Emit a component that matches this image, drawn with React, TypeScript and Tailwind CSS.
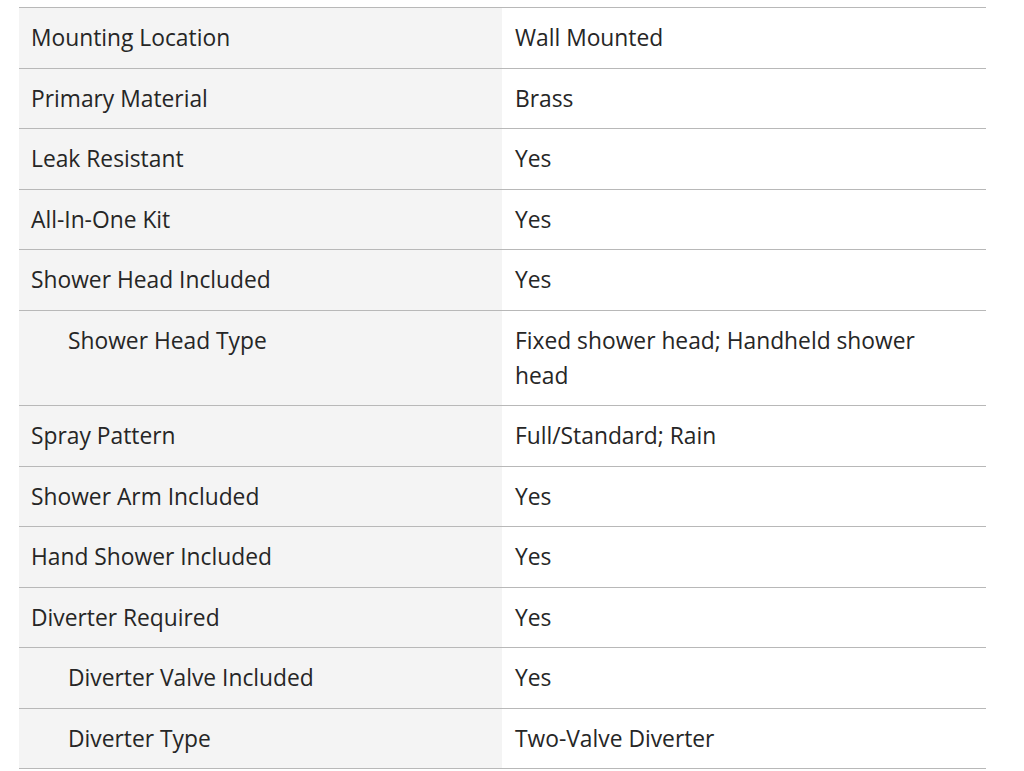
import React from "react";

const rows: { label: string; value: string; indent?: boolean }[] = [
  { label: "Mounting Location", value: "Wall Mounted" },
  { label: "Primary Material", value: "Brass" },
  { label: "Leak Resistant", value: "Yes" },
  { label: "All-In-One Kit", value: "Yes" },
  { label: "Shower Head Included", value: "Yes" },
  { label: "Shower Head Type", value: "Fixed shower head; Handheld shower head", indent: true },
  { label: "Spray Pattern", value: "Full/Standard; Rain" },
  { label: "Shower Arm Included", value: "Yes" },
  { label: "Hand Shower Included", value: "Yes" },
  { label: "Diverter Required", value: "Yes" },
  { label: "Diverter Valve Included", value: "Yes", indent: true },
  { label: "Diverter Type", value: "Two-Valve Diverter", indent: true },
];

export default function App() {
  return (
    <div className="w-[1024px] h-[771px] bg-white overflow-hidden pt-[7px] pl-[19px]" style={{ fontFamily: "'Open Sans', sans-serif" }}>
      <div className="w-[967px] border-t border-[#b8b8b8] text-[22.8px] leading-[35px] text-[#262626]">
        {rows.map((r) => (
          <div key={r.label} className="grid grid-cols-[483px_484px] border-b border-[#b8b8b8]">
            <div className={`bg-[#f4f4f4] py-[12.25px] ${r.indent ? "pl-[49px]" : "pl-[12px]"} pr-3`}>{r.label}</div>
            <div className="py-[12.25px] pl-[13px] pr-[40px]">{r.value}</div>
          </div>
        ))}
      </div>
    </div>
  );
}
